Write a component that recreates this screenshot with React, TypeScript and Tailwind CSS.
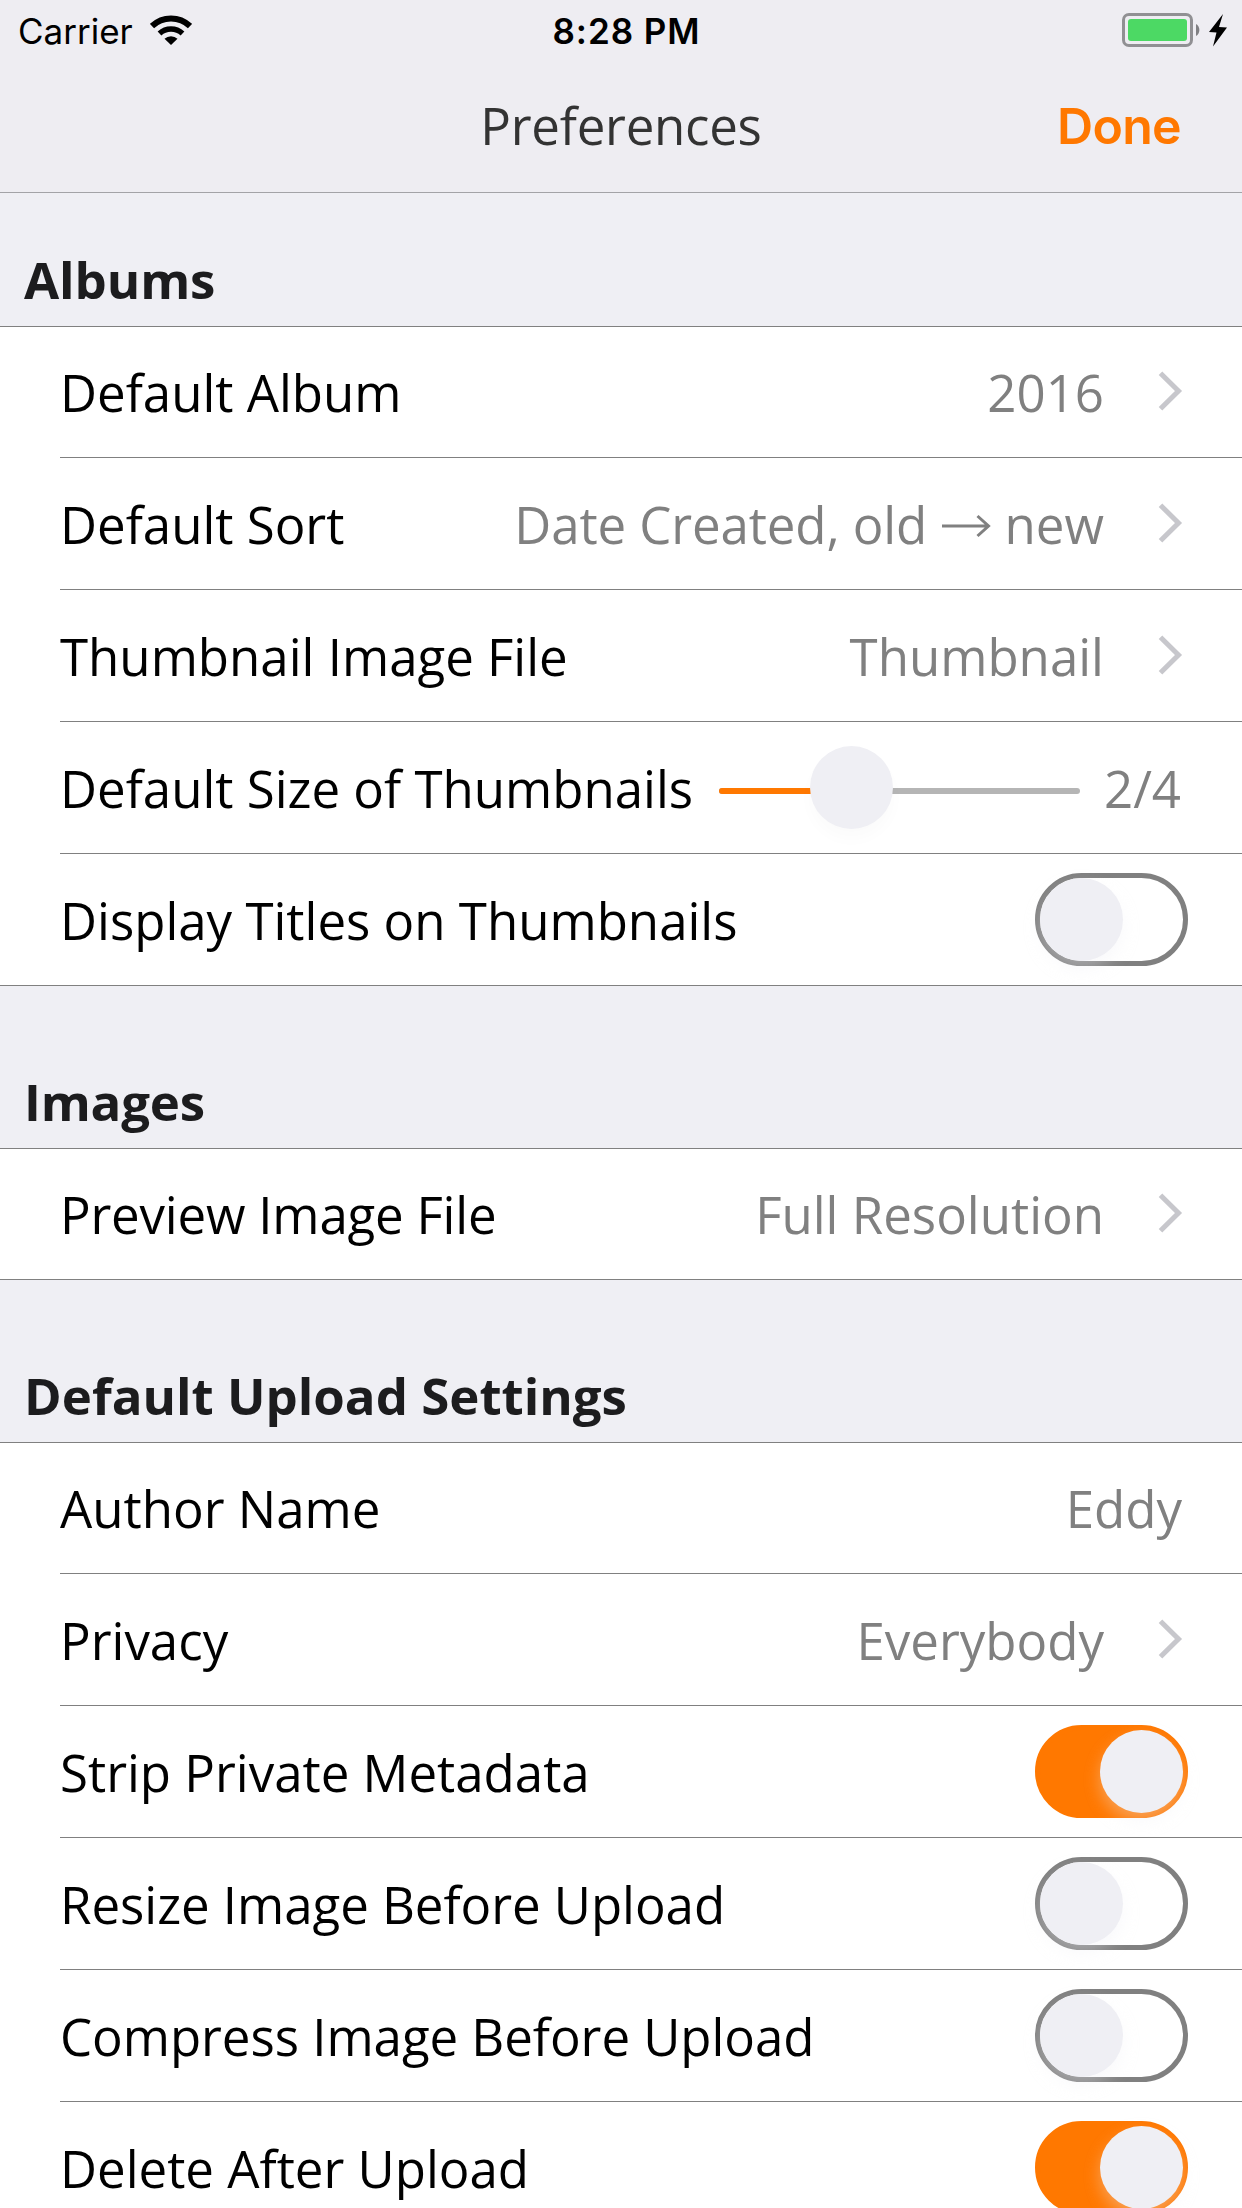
import type { ReactNode } from "react";

function Chevron() {
  return (
    <svg className="ml-[53px] mr-[59px] mb-[3px] shrink-0" width="26" height="40" viewBox="0 0 26 40" fill="none">
      <path d="M3.5 2.2 L21.5 20 L3.5 37.8" stroke="#c7c7cc" strokeWidth="5" />
    </svg>
  );
}

function Arrow() {
  return (
    <svg className="relative top-[2px] shrink-0" width="51" height="24" viewBox="0 0 51 24" fill="none" role="img" aria-label="to">
      <path d="M2 12 H48.5 M37.5 2 L48.5 12 L37.5 22" stroke="#808080" strokeWidth="3" />
    </svg>
  );
}

function Toggle({ on = false }: { on?: boolean }) {
  return (
    <div
      className={
        on
          ? "mr-[54px] mb-px flex h-[93px] w-[153px] justify-end rounded-full border-[5px] border-[#ff7800] bg-[#ff7800]"
          : "mr-[54px] mb-px flex h-[93px] w-[153px] rounded-full border-[5px] border-[#808080] bg-white"
      }
    >
      <div className="size-[83px] rounded-full bg-[#efeff4] shadow-[0_8px_16px_rgba(239,239,244,0.35)]" />
    </div>
  );
}

function Value({ children }: { children: ReactNode }) {
  return <span className="flex items-center whitespace-pre text-[#808080]">{children}</span>;
}

function Row({ label, first, last, children }: { label: ReactNode; first?: boolean; last?: boolean; children: ReactNode }) {
  return (
    <div className={last ? "border-b border-[#808080] pl-[60px]" : "pl-[60px]"}>
      <div className={last ? "" : "border-b border-[#808080]"}>
        <div className={first ? "flex h-[130px] items-center" : "mt-px flex h-[130px] items-center"}>
          <span className="whitespace-nowrap leading-[70px]">{label}</span>
          <div className="flex flex-1 items-center justify-end leading-[70px]">{children}</div>
        </div>
      </div>
    </div>
  );
}

function Section({ title, header, children }: { title: string; header: string; children: ReactNode }) {
  return (
    <section>
      <h2 className={header}>{title}</h2>
      <div className="flow-root border-t border-[#808080] bg-white">{children}</div>
    </section>
  );
}

function StatusBar() {
  return (
    <div className="grid h-[60px] grid-cols-3 items-center font-['Inter',sans-serif] text-[35px] text-black">
      <div className="flex items-center pl-[18px]">
        <span className="mt-[2px]">Carrier</span>
        <svg className="ml-[17px]" width="42" height="30" viewBox="0 0 42 30" fill="none">
          <path d="M2 11 A27.5 27.5 0 0 1 40 11" stroke="#000" strokeWidth="6" />
          <path d="M9.5 18.5 A17 17 0 0 1 32.5 18.5" stroke="#000" strokeWidth="5.5" />
          <path d="M14.5 23.8 A9.5 9.5 0 0 1 27.5 23.8 L21 30 Z" fill="#000" />
        </svg>
      </div>
      <div className="mt-[2px] pl-[11px] text-center font-semibold tracking-[0.95px]">8:28 PM</div>
      <div className="flex items-center justify-end pr-[15px]">
        <svg width="105" height="34" viewBox="0 0 105 34">
          <rect x="1.5" y="1.5" width="68" height="31" rx="5.5" fill="none" stroke="#909093" strokeWidth="3" />
          <rect x="6" y="6" width="59" height="22" rx="3" fill="#4cd964" />
          <path d="M74 11 A7 7 0 0 1 74 23 Z" fill="#808083" />
          <path d="M101 1 L87 19 L94.5 19.5 L91 33.5 L105 14.5 L97 14 Z" fill="#000" />
        </svg>
      </div>
    </div>
  );
}

export default function App() {
  return (
    <main className="h-[2208px] w-[1242px] overflow-hidden bg-[#efeff4] font-['Open_Sans',sans-serif] text-[51px] text-black">
      <header className="h-[193px] border-b border-[#a3a3a7] bg-[#eeedf2]">
        <StatusBar />
        <div className="grid h-[132px] grid-cols-3 items-center">
          <span />
          <h1 className="mb-[3px] text-center leading-[70px] tracking-[-0.25px] text-[#333333]">Preferences</h1>
          <button className="mt-px pr-[61px] text-right font-['Inter',sans-serif] text-[50px] font-semibold tracking-[-0.7px] text-[#ff7800]">Done</button>
        </div>
      </header>

      <Section title="Albums" header="flex h-[133px] items-end pb-[12px] pl-6 font-bold leading-[70px] tracking-[-0.1px] text-[#1c1c1e]">
        <Row label="Default Album" first>
          <Value>2016</Value>
          <Chevron />
        </Row>
        <Row label="Default Sort">
          <Value>
            <span className="tracking-[-0.1px]">{"Date Created, old "}</span>
            <Arrow />
            {" new"}
          </Value>
          <Chevron />
        </Row>
        <Row label="Thumbnail Image File">
          <Value>Thumbnail</Value>
          <Chevron />
        </Row>
        <Row label="Default Size of Thumbnails">
          <div className="relative mr-[24px] mt-[5px] h-[6px] w-[361px] rounded-full bg-[#b5b5b5]">
            <div className="h-full w-[120px] rounded-full bg-[#ff7800]" />
            <div className="absolute -top-[42px] left-[91px] size-[83px] rounded-full bg-[#efeff4] shadow-[0_10px_16px_rgba(0,0,0,0.02)]" />
          </div>
          <div className="mr-[61px]">
            <Value>2/4</Value>
          </div>
        </Row>
        <Row label="Display Titles on Thumbnails" last>
          <Toggle />
        </Row>
      </Section>

      <Section title="Images" header="flex h-[162px] items-end pb-[12px] pl-6 font-bold leading-[70px] tracking-[-0.2px] text-[#1c1c1e]">
        <Row label={<span className="tracking-[-0.2px]">Preview Image File</span>} first last>
          <Value>Full Resolution</Value>
          <Chevron />
        </Row>
      </Section>

      <Section title="Default Upload Settings" header="flex h-[162px] items-end pb-[12px] pl-6 font-bold leading-[70px] text-[#1c1c1e]">
        <Row label="Author Name" first>
          <div className="mr-[60px]">
            <Value>Eddy</Value>
          </div>
        </Row>
        <Row label="Privacy">
          <Value>Everybody</Value>
          <Chevron />
        </Row>
        <Row label="Strip Private Metadata">
          <Toggle on />
        </Row>
        <Row label={<span className="tracking-[-0.04px]">Resize Image Before Upload</span>}>
          <Toggle />
        </Row>
        <Row label={<span className="tracking-[-0.04px]">Compress Image Before Upload</span>}>
          <Toggle />
        </Row>
        <Row label="Delete After Upload">
          <Toggle on />
        </Row>
      </Section>
    </main>
  );
}
